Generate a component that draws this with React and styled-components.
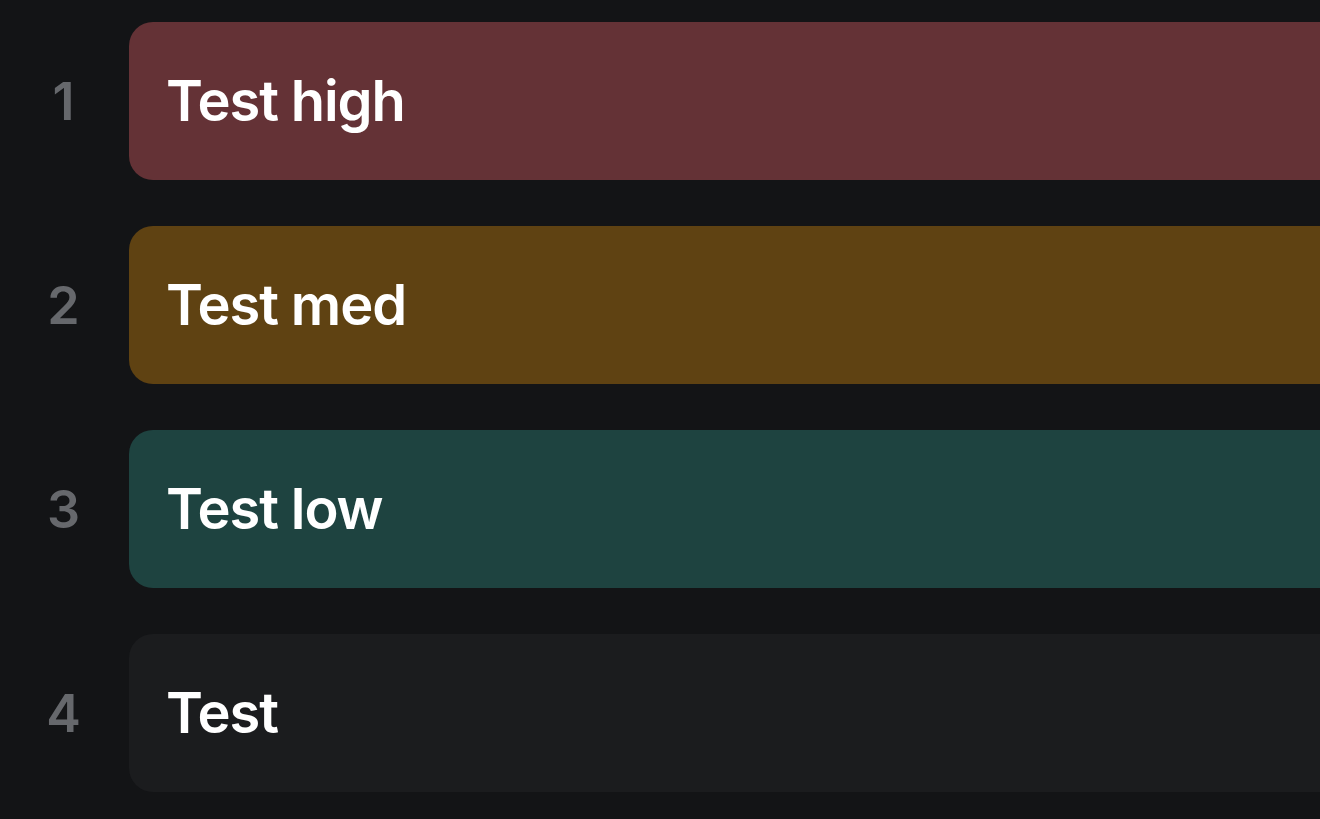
import React from "react";
import styled, { createGlobalStyle } from "styled-components";

const Global = createGlobalStyle`
  html, body { margin: 0; padding: 0; background: #131416; overflow: hidden; }
  body { font-family: Inter, "Noto Sans", sans-serif; -webkit-font-smoothing: antialiased; }
`;

const List = styled.div`
  display: flex;
  flex-direction: column;
  gap: 46px;
  padding-top: 22px;
  width: 1320px;
  height: 819px;
  box-sizing: border-box;
  overflow: hidden;
`;

const Row = styled.div`
  display: flex;
  align-items: center;
  height: 158px;
`;

const Index = styled.div`
  width: 127px;
  flex: none;
  text-align: center;
  color: #66686c;
  font-size: 52px;
  font-weight: 600;
`;

const Card = styled.div`
  flex: none;
  width: 1240px;
  margin-left: 2px;
  height: 158px;
  box-sizing: border-box;
  border-radius: 24px;
  background: ${(p) => p.$bg};
  display: flex;
  align-items: center;
  padding-left: 37px;
  color: #ffffff;
  font-size: 56px;
  font-weight: 600;
  letter-spacing: -1.1px;
`;

const items = [
  { n: 1, label: "Test high", bg: "#643236" },
  { n: 2, label: "Test med", bg: "#5f4212" },
  { n: 3, label: "Test low", bg: "#1e4340" },
  { n: 4, label: "Test", bg: "#1b1c1e" },
];

export default function App() {
  return (
    <>
      <Global />
      <List>
        {items.map((it) => (
          <Row key={it.n}>
            <Index>{it.n}</Index>
            <Card $bg={it.bg}>{it.label}</Card>
          </Row>
        ))}
      </List>
    </>
  );
}
